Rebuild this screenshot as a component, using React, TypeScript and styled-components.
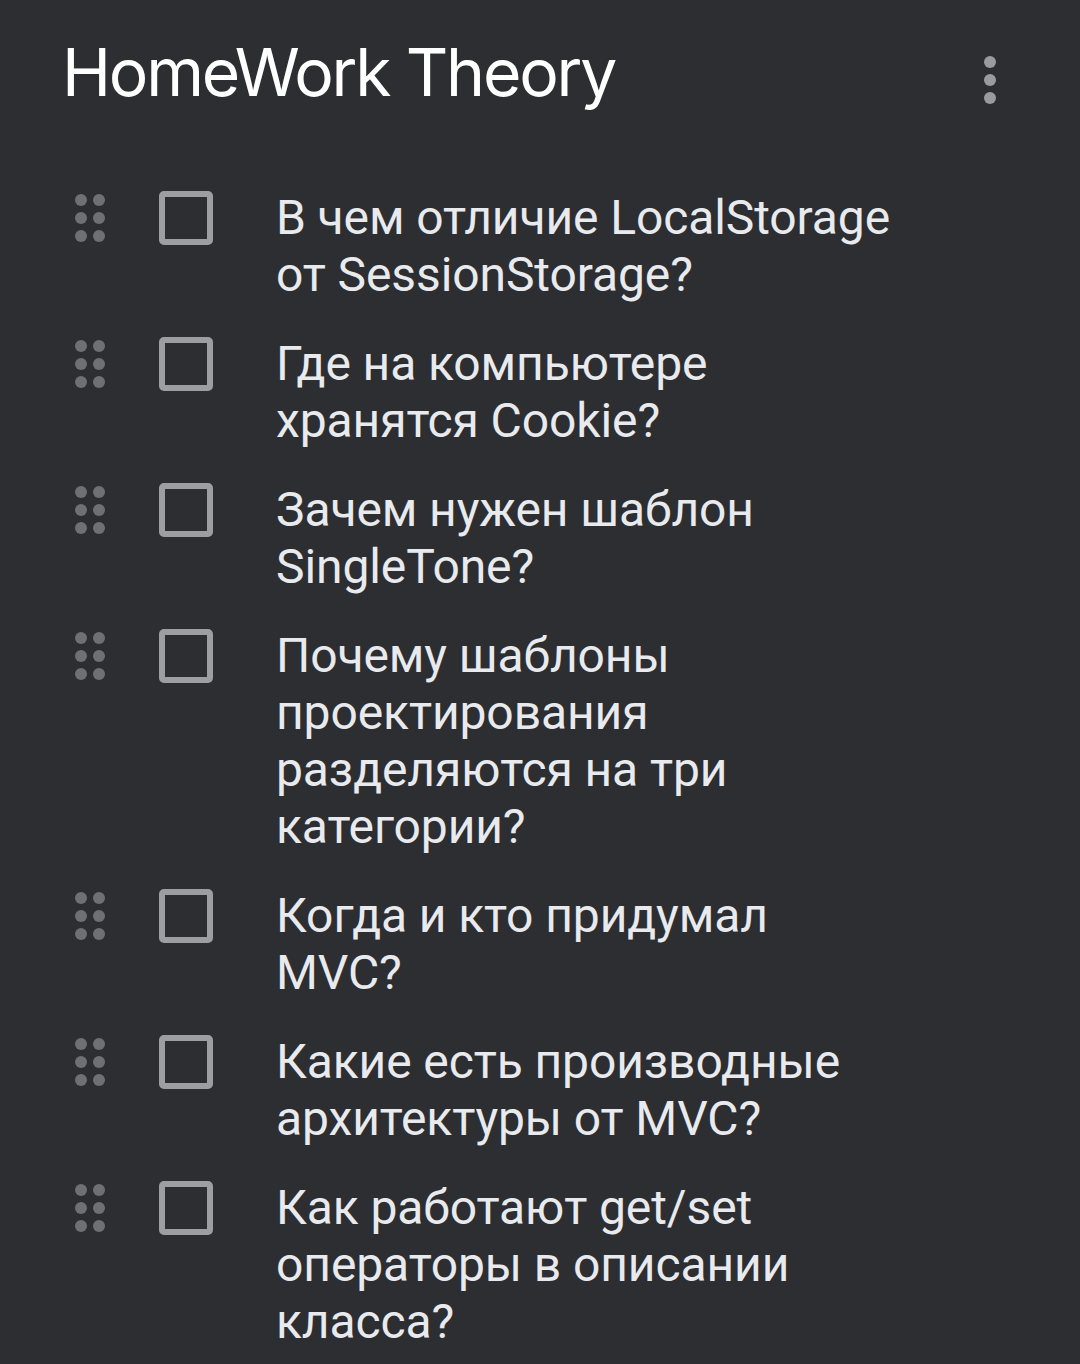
import React from "react";
import styled, { createGlobalStyle } from "styled-components";

const Global = createGlobalStyle`
  html, body { margin: 0; padding: 0; background: #2d2e32; }
  body { width: 1080px; min-height: 1364px; overflow: hidden; }
`;

const Page = styled.div`
  width: 1080px;
  height: 1364px;
  background: #2d2e32;
  box-sizing: border-box;
  padding-top: 32px;
  overflow: hidden;
`;

const Header = styled.header`
  display: flex;
  align-items: center;
  justify-content: space-between;
  padding: 0 84px 0 62px;
  height: 80px;
`;

const Title = styled.h1`
  margin: 0;
  font-family: Inter, "Open Sans", sans-serif;
  font-weight: 400;
  font-size: 66px;
  line-height: 80px;
  letter-spacing: -2.2px;
  color: #ffffff;
`;

const MenuButton = styled.div`
  display: flex;
  flex-direction: column;
  gap: 6px;
  margin-top: 16px;
`;

const Dot = styled.span<{ $color: string }>`
  width: 12px;
  height: 12px;
  border-radius: 50%;
  background: ${(p) => p.$color};
`;

const List = styled.ul`
  list-style: none;
  margin: 77px 0 0 0;
  padding: 0 0 0 75px;
  display: flex;
  flex-direction: column;
  gap: 32px;
`;

const Row = styled.li`
  display: flex;
  align-items: flex-start;
`;

const Controls = styled.div`
  height: 57px;
  display: flex;
  align-items: center;
  flex-shrink: 0;
`;

const Handle = styled.div`
  display: grid;
  grid-template-columns: 12px 12px;
  gap: 6px;
  width: 30px;
`;

const Checkbox = styled.div`
  width: 54px;
  height: 54px;
  box-sizing: border-box;
  border: 6px solid #9d9ea1;
  border-radius: 5px;
  margin-left: 54px;
  margin-right: 63px;
`;

const Text = styled.div`
  font-family: Roboto, "Liberation Sans", sans-serif;
  font-size: 48px;
  line-height: 57px;
  letter-spacing: -0.1px;
  color: #e8eaed;
  width: 640px;
`;

const items = [
  ["В чем отличие LocalStorage", "от SessionStorage?"],
  ["Где на компьютере", "хранятся Cookie?"],
  ["Зачем нужен шаблон", "SingleTone?"],
  ["Почему шаблоны", "проектирования", "разделяются на три", "категории?"],
  ["Когда и кто придумал", "MVC?"],
  ["Какие есть производные", "архитектуры от MVC?"],
  ["Как работают get/set", "операторы в описании", "класса?"],
];

export default function App() {
  return (
    <Page>
      <Global />
      <Header>
        <Title>HomeWork Theory</Title>
        <MenuButton>
          <Dot $color="#9a9b9e" />
          <Dot $color="#9a9b9e" />
          <Dot $color="#9a9b9e" />
        </MenuButton>
      </Header>
      <List>
        {items.map((lines, i) => (
          <Row key={i}>
            <Controls>
              <Handle>
                {Array.from({ length: 6 }).map((_, j) => (
                  <Dot key={j} $color="#6f7074" />
                ))}
              </Handle>
              <Checkbox />
            </Controls>
            <Text>
              {lines.map((l, k) => (
                <div key={k}>{l}</div>
              ))}
            </Text>
          </Row>
        ))}
      </List>
    </Page>
  );
}
